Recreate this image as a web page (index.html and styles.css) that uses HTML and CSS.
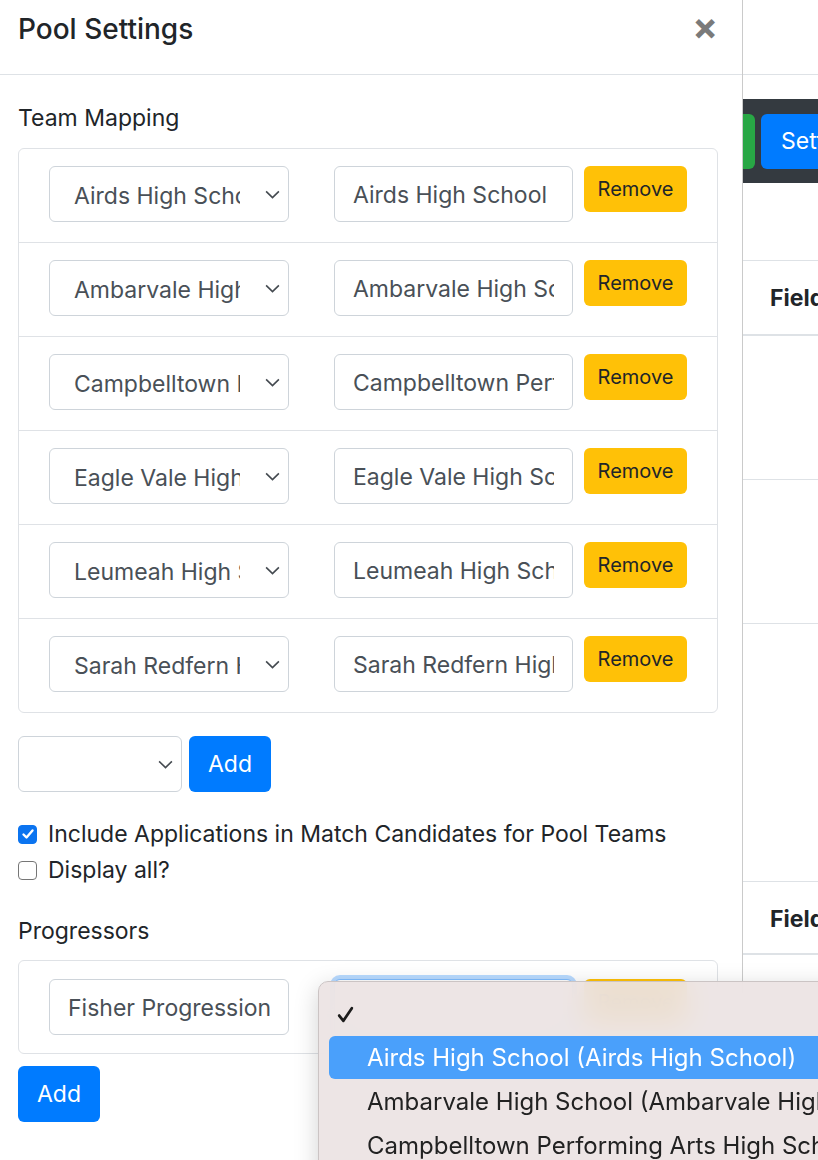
FILE: index.html
```html
<!DOCTYPE html>
<html lang="en">
<head>
  <meta charset="UTF-8" />
  <meta name="viewport" content="width=device-width, initial-scale=1.0"/>
  <title>Pool Settings</title>
  <link rel="stylesheet" href="styles.css">
</head>
<body>

<div class="screen">
  <aside class="panel">
    <div class="panel-header">
      <h5 class="panel-title">Pool Settings</h5>
      <span class="close">&times;</span>
    </div>

    <div class="panel-body">
      <div class="section-label">Team Mapping</div>

      <div class="list-card">
        <div class="map-row">
          <div class="select-wrap">
            <select class="field select"><option>Airds High School</option></select>
            <svg class="chev" viewBox="0 0 16 16"><path d="M2 5l6 6 6-6"/></svg>
          </div>
          <input class="field text" type="text" value="Airds High School">
          <button class="btn btn-warning">Remove</button>
        </div>
        <div class="map-row">
          <div class="select-wrap">
            <select class="field select"><option>Ambarvale High School</option></select>
            <svg class="chev" viewBox="0 0 16 16"><path d="M2 5l6 6 6-6"/></svg>
          </div>
          <input class="field text" type="text" value="Ambarvale High School">
          <button class="btn btn-warning">Remove</button>
        </div>
        <div class="map-row">
          <div class="select-wrap">
            <select class="field select"><option>Campbelltown Performing Arts High School</option></select>
            <svg class="chev" viewBox="0 0 16 16"><path d="M2 5l6 6 6-6"/></svg>
          </div>
          <input class="field text" type="text" value="Campbelltown Performing Arts High School">
          <button class="btn btn-warning">Remove</button>
        </div>
        <div class="map-row">
          <div class="select-wrap">
            <select class="field select"><option>Eagle Vale High School</option></select>
            <svg class="chev" viewBox="0 0 16 16"><path d="M2 5l6 6 6-6"/></svg>
          </div>
          <input class="field text" type="text" value="Eagle Vale High School">
          <button class="btn btn-warning">Remove</button>
        </div>
        <div class="map-row">
          <div class="select-wrap">
            <select class="field select"><option>Leumeah High School</option></select>
            <svg class="chev" viewBox="0 0 16 16"><path d="M2 5l6 6 6-6"/></svg>
          </div>
          <input class="field text" type="text" value="Leumeah High School">
          <button class="btn btn-warning">Remove</button>
        </div>
        <div class="map-row">
          <div class="select-wrap">
            <select class="field select"><option>Sarah Redfern High School</option></select>
            <svg class="chev" viewBox="0 0 16 16"><path d="M2 5l6 6 6-6"/></svg>
          </div>
          <input class="field text" type="text" value="Sarah Redfern High School">
          <button class="btn btn-warning">Remove</button>
        </div>
      </div>

      <div class="add-row">
        <div class="select-wrap small">
          <select class="field select"><option></option></select>
          <svg class="chev" viewBox="0 0 16 16"><path d="M2 5l6 6 6-6"/></svg>
        </div>
        <button class="btn btn-primary">Add</button>
      </div>

      <div class="checks">
        <label class="check">
          <span class="box checked">
            <svg viewBox="0 0 16 16"><path d="M3.5 8.5l3 3 6-7"/></svg>
          </span>
          Include Applications in Match Candidates for Pool Teams
        </label>
        <label class="check">
          <span class="box"></span>
          Display all?
        </label>
      </div>

      <div class="section-label progressors">Progressors</div>

      <div class="list-card">
        <div class="map-row prog-row">
          <input class="field text" type="text" value="Fisher Progression">
          <div class="select-wrap focus">
            <select class="field select"><option></option></select>
          </div>
          <button class="btn btn-warning">Remove</button>
        </div>
      </div>

      <button class="btn btn-primary add-bottom">Add</button>
    </div>
  </aside>

  <main class="page">
    <div class="page-top"></div>
    <div class="navbar">
      <button class="nav-btn green"></button>
      <button class="nav-btn blue">Settings</button>
    </div>
    <div class="tbl">
      <div class="th">Field</div>
      <div class="tr"></div>
      <div class="tr"></div>
      <div class="tr tall"></div>
    </div>
    <div class="tbl second">
      <div class="th">Field</div>
    </div>
  </main>
</div>

<!-- open native select menu -->
<div class="native-menu">
  <div class="menu-item">
    <svg class="tick" viewBox="0 0 16 18"><path d="M2 10l4 5 8-12"/></svg>
  </div>
  <div class="menu-item active">Airds High School (Airds High School)</div>
  <div class="menu-item">Ambarvale High School (Ambarvale High School)</div>
  <div class="menu-item">Campbelltown Performing Arts High School (Campbelltown Performing Arts High School)</div>
</div>

</body>
</html>
```

FILE: styles.css
```css
* {
  box-sizing: border-box;
}

body {
  margin: 0;
  font-family: 'Inter', 'Liberation Sans', sans-serif;
  color: #212529;
  background: #ffffff;
  overflow: hidden;
  height: 1160px;
  position: relative;
}

.screen {
  display: flex;
  height: 1160px;
}

/* ---- side panel ---- */
.panel {
  width: 743px;
  flex-shrink: 0;
  border-right: 1px solid #cacaca;
  background: #fff;
}

.panel-header {
  height: 75px;
  border-bottom: 1px solid #dee2e6;
  display: flex;
  justify-content: space-between;
  align-items: flex-start;
  padding: 0 24px 0 18px;
}

.panel-title {
  margin: 0;
  font-size: 28px;
  font-weight: 500;
  line-height: 58px;
}

.close {
  font-size: 38px;
  font-weight: 700;
  color: #7a7a7a;
  line-height: 52px;
}

.panel-body {
  padding: 25px 24px 0 18px;
}

.section-label {
  font-size: 23px;
  line-height: 36px;
  margin-bottom: 12px;
}

.section-label.progressors {
  margin-top: 25px;
  margin-bottom: 11px;
}

.list-card {
  width: 700px;
  border: 1px solid #dfe2e6;
  border-radius: 6px;
}

.map-row {
  display: flex;
  align-items: flex-start;
  padding: 17px 30px 20px 30px;
  border-top: 1px solid #dfe2e6;
}

.map-row:first-child {
  border-top: none;
}

.prog-row {
  padding: 18px 30px 18px 30px;
}

.field {
  height: 56px;
  border: 1px solid #ced4da;
  border-radius: 6px;
  font-family: inherit;
  font-size: 23px;
  color: #495057;
  background: #fff;
  outline: none;
  padding-top: 3px;
}

.text {
  width: 239px;
  padding-left: 18px;
  padding-right: 18px;
}

.select-wrap {
  position: relative;
  width: 240px;
  margin-right: 45px;
}

.select {
  width: 100%;
  appearance: none;
  -webkit-appearance: none;
  padding-left: 24px;
  padding-right: 48px;
}

.chev {
  position: absolute;
  right: 8px;
  top: 20px;
  width: 17px;
  height: 17px;
  fill: none;
  stroke: #444a50;
  stroke-width: 1.5;
}

.prog-row .text {
  width: 240px;
  margin-right: 45px;
}

.prog-row .select-wrap {
  width: 239px;
  margin-right: 0;
}

.select-wrap.focus .select {
  border-color: #80bdff;
  box-shadow: 0 0 0 4px rgba(0, 123, 255, 0.28);
}

.btn {
  border: none;
  border-radius: 6px;
  font-family: inherit;
  cursor: pointer;
}

.btn-warning {
  margin-left: 11px;
  width: 103px;
  height: 46px;
  background: #ffc107;
  color: #212529;
  font-size: 20px;
}

.btn-primary {
  height: 56px;
  width: 82px;
  background: #007bff;
  color: #fff;
  font-size: 23px;
}

.add-row {
  display: flex;
  gap: 7px;
  margin-top: 23px;
}

.select-wrap.small {
  width: 164px;
  margin-right: 0;
}

.checks {
  margin-top: 24px;
}

.check {
  display: flex;
  align-items: center;
  font-size: 23px;
  line-height: 36px;
  gap: 11px;
}

.box {
  width: 19px;
  height: 19px;
  border: 1px solid #767676;
  border-radius: 4px;
  display: flex;
  align-items: center;
  justify-content: center;
}

.box.checked {
  background: #0b74f0;
  border-color: #0b74f0;
}

.box svg {
  width: 16px;
  height: 16px;
  fill: none;
  stroke: #fff;
  stroke-width: 2.4;
  stroke-linecap: round;
  stroke-linejoin: round;
}

.add-bottom {
  margin-top: 12px;
}

/* ---- page behind the panel ---- */
.page {
  flex: 1;
  overflow: hidden;
}

.page-top {
  height: 75px;
  border-bottom: 1px solid #dee2e6;
}

.navbar {
  margin-top: 24px;
  height: 84px;
  background: #343a40;
  display: flex;
  align-items: center;
  gap: 6px;
  margin-left: -40px;
}

.nav-btn {
  height: 55px;
  border: none;
  border-radius: 6px;
  font-family: inherit;
  font-size: 23px;
  color: #fff;
  flex-shrink: 0;
}

.nav-btn.green {
  width: 52px;
  background: #28a745;
}

.nav-btn.blue {
  width: 140px;
  background: #007bff;
  text-align: left;
  padding-left: 20px;
}

.tbl {
  margin-top: 77px;
  border-top: 1px solid #dee2e6;
}

.th {
  height: 75px;
  border-bottom: 2px solid #dee2e6;
  font-weight: 700;
  font-size: 23px;
  padding-left: 27px;
  line-height: 74px;
}

.tr {
  height: 144px;
  border-bottom: 1px solid #dee2e6;
}

.tr.tall {
  height: 257px;
  border-bottom: none;
}

.tbl.second {
  margin-top: 0;
}

.tbl.second .th {
  height: 73px;
}

/* ---- native dropdown menu that is open over the form ---- */
.native-menu {
  position: absolute;
  left: 318px;
  top: 981px;
  width: 560px;
  height: 260px;
  padding: 10px 0 0 10px;
  background: rgba(236, 227, 227, 0.92);
  backdrop-filter: blur(14px);
  border: 1px solid #cbc4c4;
  border-radius: 10px;
  box-shadow: 0 6px 24px rgba(0, 0, 0, 0.18);
}

.menu-item {
  height: 44px;
  line-height: 44px;
  padding-left: 38px;
  font-size: 24px;
  color: #222;
  white-space: nowrap;
  display: flex;
  align-items: center;
}

.menu-item.active {
  background: #4aa0fb;
  color: #fff;
  border-radius: 6px 0 0 6px;
  height: 43px;
  margin-bottom: 1px;
}

.tick {
  width: 17px;
  height: 19px;
  margin-left: -30px;
  fill: none;
  stroke: #1c1c1c;
  stroke-width: 2.6;
  stroke-linecap: round;
  stroke-linejoin: round;
}
```
